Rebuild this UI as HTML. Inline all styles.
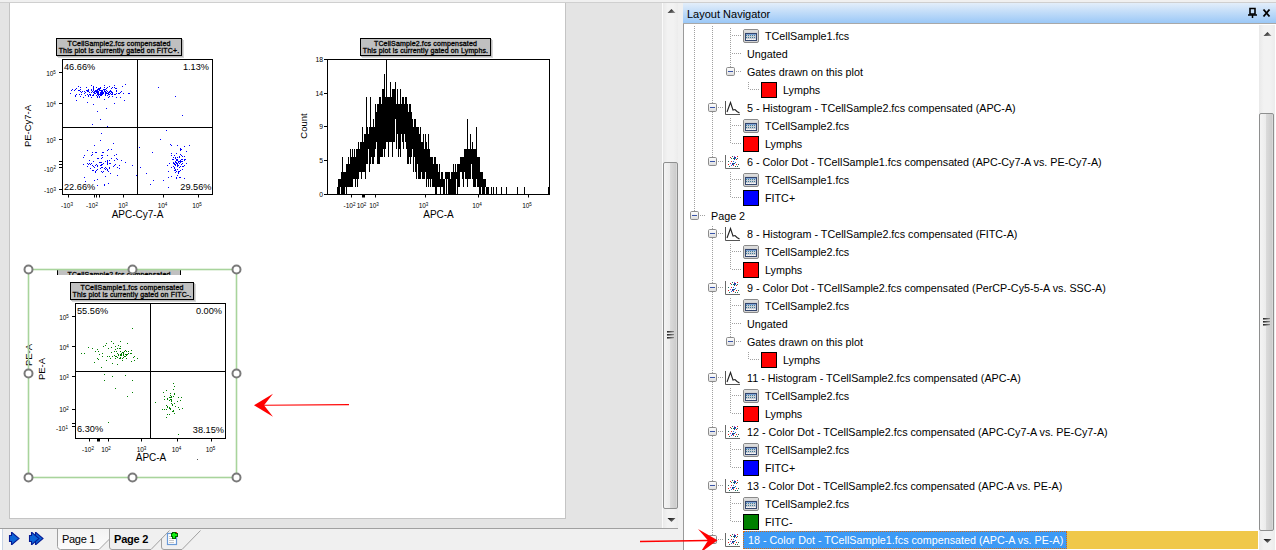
<!DOCTYPE html><html><head><meta charset="utf-8"><style>
*{margin:0;padding:0;box-sizing:border-box}
html,body{width:1276px;height:550px;overflow:hidden;background:#e4e4e4;font-family:"Liberation Sans", sans-serif;}
.a{position:absolute}
.t{position:absolute;white-space:nowrap;font-size:10.75px;line-height:12px;color:#000}
</style></head><body>
<div class="a" style="left:0;top:0;width:1276px;height:2px;background:#f0f0f0"></div><div class="a" style="left:0;top:2px;width:1276px;height:1px;background:#cfcfcf"></div><div class="a" style="left:9px;top:3px;width:557px;height:516px;background:#c4c4c4"></div><div class="a" style="left:10px;top:3px;width:555px;height:515px;background:#fff"></div><div class="a" style="left:662px;top:3px;width:1px;height:525px;background:#fafafa"></div><div class="a" style="left:663px;top:3px;width:15px;height:525px;background:linear-gradient(90deg,#e9e9e9,#f2f2f2 30%,#f2f2f2 70%,#ececec)"></div><div class="a" style="left:678px;top:3px;width:5px;height:547px;background:#f0f0f0"></div><svg class="a" style="left:667px;top:8px" width="9" height="6"><defs><linearGradient id="ag67111" x1="0" y1="0" x2="1" y2="1"><stop offset="0" stop-color="#000"/><stop offset="1" stop-color="#9a9a9a"/></linearGradient></defs><path d="M0.5 5 L4.5 1 L8.5 5 Z" fill="url(#ag67111)"/></svg><div class="a" style="left:663px;top:162px;width:15px;height:347px;border:1px solid #8e8f8f;border-radius:2px;background:linear-gradient(90deg,#f4f4f4,#ececec 45%,#dadada 50%,#cdcdcd 90%,#e0e0e0)"></div><div class="a" style="left:667px;top:331px;width:7px;height:1px;background:linear-gradient(90deg,#222,#888)"></div><div class="a" style="left:667px;top:332px;width:7px;height:1px;background:linear-gradient(90deg,#777,#ccc)"></div><div class="a" style="left:667px;top:334px;width:7px;height:1px;background:linear-gradient(90deg,#222,#888)"></div><div class="a" style="left:667px;top:335px;width:7px;height:1px;background:linear-gradient(90deg,#777,#ccc)"></div><div class="a" style="left:667px;top:337px;width:7px;height:1px;background:linear-gradient(90deg,#222,#888)"></div><div class="a" style="left:667px;top:338px;width:7px;height:1px;background:linear-gradient(90deg,#777,#ccc)"></div><svg class="a" style="left:667px;top:517px" width="9" height="6"><defs><linearGradient id="ad671519" x1="0" y1="0" x2="1" y2="1"><stop offset="0" stop-color="#000"/><stop offset="1" stop-color="#9a9a9a"/></linearGradient></defs><path d="M0.5 1 L8.5 1 L4.5 5 Z" fill="url(#ad671519)"/></svg><div class="a" style="left:0;top:528px;width:678px;height:1px;background:#a0a0a0"></div><div class="a" style="left:0;top:529px;width:678px;height:21px;background:#f0f0f0"></div><div class="a" style="left:0;top:529px;width:3px;height:21px;background:#fff;border-right:1px solid #c8d4e4"></div><svg class="a" style="left:0;top:0;pointer-events:none" width="210" height="550"><path d="M9.5 535.5 H11.5 V532.5 H12 L19 538.5 L12 544.5 H11.5 V541.5 H9.5 Z" fill="#0b64d6" stroke="#071c94" stroke-width="1.1"/><path d="M35.5 532.5 H36 L43 538.5 L36 544.5 H35.5 Z" fill="#0b64d6" stroke="#071c94" stroke-width="1.1"/><path d="M29.5 535.5 H31.5 V532.5 H32 L39 538.5 L32 544.5 H31.5 V541.5 H29.5 Z" fill="#0b64d6" stroke="#071c94" stroke-width="1.1"/><path d="M57 529 H110 V539 L99 550 H57 Z" fill="url(#tab1g)"/><path d="M57.5 529 V546.5 Q57.5 549.5 60.5 549.5 H99 L109.5 539" fill="none" stroke="#a0a0a0" stroke-width="1"/><path d="M109.5 529 V547 Q109.5 549.5 112 549.5 H151 L169.5 530.5" fill="none" stroke="#a0a0a0" stroke-width="1"/><path d="M161.5 538.5 V547 Q161.5 549.5 164 549.5 H182 L200.5 530.5" fill="none" stroke="#a0a0a0" stroke-width="1"/><defs><linearGradient id="tab1g" x1="0" y1="0" x2="0" y2="1"><stop offset="0" stop-color="#f3f3f3"/><stop offset="1" stop-color="#fdfdfd"/></linearGradient></defs><rect x="167.5" y="533.5" width="9" height="11" fill="#fff" stroke="#6a9ad8" stroke-width="1.2"/><path d="M169 536.5 H171 M169 538.5 H172 M169 540.5 H174 M169 542.5 H174" stroke="#c8c8c8"/><g shape-rendering="crispEdges"><rect x="172" y="532" width="4" height="7" fill="#006400"/><rect x="171" y="533" width="7" height="4" fill="#006400"/><rect x="173" y="533" width="2" height="5" fill="#10f010"/><rect x="172" y="534" width="5" height="2" fill="#10f010"/><rect x="176" y="532" width="1" height="1" fill="#f03020"/></g></svg><div class="t" style="left:62px;top:533px;font-size:11px;letter-spacing:-0.3px">Page 1</div><div class="t" style="left:114px;top:533px;font-size:11px;font-weight:bold;letter-spacing:-0.2px">Page 2</div><div class="a" style="left:683px;top:3px;width:593px;height:20px;background:linear-gradient(180deg,#e3eefa,#9bc8f7)"></div><div class="a" style="left:683px;top:23px;width:593px;height:1px;background:#a8a8a8"></div><div class="t" style="left:687px;top:8px;font-size:11px;color:#000">Layout Navigator</div><svg class="a" style="left:1246px;top:6px" width="28" height="14"><path d="M4 2.5 H9 V8 H4 Z" fill="none" stroke="#000" stroke-width="1.6"/><path d="M2 9 H11 M6.5 9 V12" stroke="#000" stroke-width="1.5"/><path d="M17.5 3.5 L23.5 10.5 M23.5 3.5 L17.5 10.5" stroke="#000" stroke-width="1.9"/></svg><div class="a" style="left:683px;top:24px;width:1px;height:526px;background:#9a9a9a"></div><div class="a" style="left:684px;top:24px;width:592px;height:526px;background:#fff"></div><div class="a" style="left:1259px;top:25px;width:16px;height:525px;background:linear-gradient(90deg,#e9e9e9,#f2f2f2 30%,#f2f2f2 70%,#ececec)"></div><svg class="a" style="left:1263px;top:31px" width="9" height="6"><defs><linearGradient id="ag126734" x1="0" y1="0" x2="1" y2="1"><stop offset="0" stop-color="#000"/><stop offset="1" stop-color="#9a9a9a"/></linearGradient></defs><path d="M0.5 5 L4.5 1 L8.5 5 Z" fill="url(#ag126734)"/></svg><div class="a" style="left:1259px;top:113px;width:15px;height:418px;border:1px solid #8e8f8f;border-radius:2px;background:linear-gradient(90deg,#f4f4f4,#ececec 45%,#dadada 50%,#cdcdcd 90%,#e0e0e0)"></div><div class="a" style="left:1263px;top:318px;width:7px;height:1px;background:linear-gradient(90deg,#222,#888)"></div><div class="a" style="left:1263px;top:319px;width:7px;height:1px;background:linear-gradient(90deg,#777,#ccc)"></div><div class="a" style="left:1263px;top:321px;width:7px;height:1px;background:linear-gradient(90deg,#222,#888)"></div><div class="a" style="left:1263px;top:322px;width:7px;height:1px;background:linear-gradient(90deg,#777,#ccc)"></div><div class="a" style="left:1263px;top:324px;width:7px;height:1px;background:linear-gradient(90deg,#222,#888)"></div><div class="a" style="left:1263px;top:325px;width:7px;height:1px;background:linear-gradient(90deg,#777,#ccc)"></div><svg class="a" style="left:1263px;top:538px" width="9" height="6"><defs><linearGradient id="ad1267540" x1="0" y1="0" x2="1" y2="1"><stop offset="0" stop-color="#000"/><stop offset="1" stop-color="#9a9a9a"/></linearGradient></defs><path d="M0.5 1 L8.5 1 L4.5 5 Z" fill="url(#ad1267540)"/></svg><div class="t" style="left:765px;top:30px">TCellSample1.fcs</div><div class="t" style="left:747px;top:48px">Ungated</div><div class="t" style="left:747px;top:66px">Gates drawn on this plot</div><div class="t" style="left:783px;top:84px">Lymphs</div><div class="t" style="left:747px;top:102px">5 - Histogram - TCellSample2.fcs compensated (APC-A)</div><div class="t" style="left:765px;top:120px">TCellSample2.fcs</div><div class="t" style="left:765px;top:138px">Lymphs</div><div class="t" style="left:747px;top:156px">6 - Color Dot - TCellSample1.fcs compensated (APC-Cy7-A vs. PE-Cy7-A)</div><div class="t" style="left:765px;top:174px">TCellSample1.fcs</div><div class="t" style="left:765px;top:192px">FITC+</div><div class="t" style="left:711px;top:210px">Page 2</div><div class="t" style="left:747px;top:228px">8 - Histogram - TCellSample2.fcs compensated (FITC-A)</div><div class="t" style="left:765px;top:246px">TCellSample2.fcs</div><div class="t" style="left:765px;top:264px">Lymphs</div><div class="t" style="left:747px;top:282px">9 - Color Dot - TCellSample2.fcs compensated (PerCP-Cy5-5-A vs. SSC-A)</div><div class="t" style="left:765px;top:300px">TCellSample2.fcs</div><div class="t" style="left:747px;top:318px">Ungated</div><div class="t" style="left:747px;top:336px">Gates drawn on this plot</div><div class="t" style="left:783px;top:354px">Lymphs</div><div class="t" style="left:747px;top:372px">11 - Histogram - TCellSample2.fcs compensated (APC-A)</div><div class="t" style="left:765px;top:390px">TCellSample2.fcs</div><div class="t" style="left:765px;top:408px">Lymphs</div><div class="t" style="left:747px;top:426px">12 - Color Dot - TCellSample2.fcs compensated (APC-Cy7-A vs. PE-Cy7-A)</div><div class="t" style="left:765px;top:444px">TCellSample2.fcs</div><div class="t" style="left:765px;top:462px">FITC+</div><div class="t" style="left:747px;top:480px">13 - Color Dot - TCellSample2.fcs compensated (APC-A vs. PE-A)</div><div class="t" style="left:765px;top:498px">TCellSample2.fcs</div><div class="t" style="left:765px;top:516px">FITC-</div><div class="a" style="left:743px;top:531px;width:324px;height:18px;background:#3d9af5;border:1px dotted #d86a10"></div><div class="a" style="left:1067px;top:531px;width:191px;height:18px;background:#f0c84a"></div><div class="t" style="left:748px;top:534px;color:#fff">18 - Color Dot - TCellSample1.fcs compensated (APC-A vs. PE-A)</div><svg class="a" style="left:0;top:0" width="1276" height="550"><defs><linearGradient id="bxg" x1="0" y1="0" x2="0" y2="1"><stop offset="0" stop-color="#fff"/><stop offset="1" stop-color="#dcdcdc"/></linearGradient><linearGradient id="dig" x1="0" y1="0" x2="0" y2="1"><stop offset="0" stop-color="#5a8ee0"/><stop offset="0.5" stop-color="#b8c8e0"/><stop offset="1" stop-color="#d0d8e8"/></linearGradient></defs><path d="M694 26h1v1h-1zM694 28h1v1h-1zM694 30h1v1h-1zM694 32h1v1h-1zM694 34h1v1h-1zM694 36h1v1h-1zM694 38h1v1h-1zM694 40h1v1h-1zM694 42h1v1h-1zM694 44h1v1h-1zM712 26h1v1h-1zM712 28h1v1h-1zM712 30h1v1h-1zM712 32h1v1h-1zM712 34h1v1h-1zM712 36h1v1h-1zM712 38h1v1h-1zM712 40h1v1h-1zM712 42h1v1h-1zM712 44h1v1h-1zM730 28h1v1h-1zM730 30h1v1h-1zM730 32h1v1h-1zM730 34h1v1h-1zM730 36h1v1h-1zM730 38h1v1h-1zM730 40h1v1h-1zM730 42h1v1h-1zM730 44h1v1h-1zM732 35h1v1h-1zM734 35h1v1h-1zM736 35h1v1h-1zM738 35h1v1h-1zM740 35h1v1h-1zM694 46h1v1h-1zM694 48h1v1h-1zM694 50h1v1h-1zM694 52h1v1h-1zM694 54h1v1h-1zM694 56h1v1h-1zM694 58h1v1h-1zM694 60h1v1h-1zM694 62h1v1h-1zM712 46h1v1h-1zM712 48h1v1h-1zM712 50h1v1h-1zM712 52h1v1h-1zM712 54h1v1h-1zM712 56h1v1h-1zM712 58h1v1h-1zM712 60h1v1h-1zM712 62h1v1h-1zM730 46h1v1h-1zM730 48h1v1h-1zM730 50h1v1h-1zM730 52h1v1h-1zM730 54h1v1h-1zM730 56h1v1h-1zM730 58h1v1h-1zM730 60h1v1h-1zM730 62h1v1h-1zM732 53h1v1h-1zM734 53h1v1h-1zM736 53h1v1h-1zM738 53h1v1h-1zM740 53h1v1h-1zM694 64h1v1h-1zM694 66h1v1h-1zM694 68h1v1h-1zM694 70h1v1h-1zM694 72h1v1h-1zM694 74h1v1h-1zM694 76h1v1h-1zM694 78h1v1h-1zM694 80h1v1h-1zM712 64h1v1h-1zM712 66h1v1h-1zM712 68h1v1h-1zM712 70h1v1h-1zM712 72h1v1h-1zM712 74h1v1h-1zM712 76h1v1h-1zM712 78h1v1h-1zM712 80h1v1h-1zM730 64h1v1h-1zM730 66h1v1h-1zM736 71h1v1h-1zM738 71h1v1h-1zM740 71h1v1h-1zM694 82h1v1h-1zM694 84h1v1h-1zM694 86h1v1h-1zM694 88h1v1h-1zM694 90h1v1h-1zM694 92h1v1h-1zM694 94h1v1h-1zM694 96h1v1h-1zM694 98h1v1h-1zM712 82h1v1h-1zM712 84h1v1h-1zM712 86h1v1h-1zM712 88h1v1h-1zM712 90h1v1h-1zM712 92h1v1h-1zM712 94h1v1h-1zM712 96h1v1h-1zM712 98h1v1h-1zM748 82h1v1h-1zM748 84h1v1h-1zM748 86h1v1h-1zM748 88h1v1h-1zM750 89h1v1h-1zM752 89h1v1h-1zM754 89h1v1h-1zM756 89h1v1h-1zM758 89h1v1h-1zM694 100h1v1h-1zM694 102h1v1h-1zM694 104h1v1h-1zM694 106h1v1h-1zM694 108h1v1h-1zM694 110h1v1h-1zM694 112h1v1h-1zM694 114h1v1h-1zM694 116h1v1h-1zM712 100h1v1h-1zM712 102h1v1h-1zM712 112h1v1h-1zM712 114h1v1h-1zM712 116h1v1h-1zM718 107h1v1h-1zM720 107h1v1h-1zM722 107h1v1h-1zM694 118h1v1h-1zM694 120h1v1h-1zM694 122h1v1h-1zM694 124h1v1h-1zM694 126h1v1h-1zM694 128h1v1h-1zM694 130h1v1h-1zM694 132h1v1h-1zM694 134h1v1h-1zM712 118h1v1h-1zM712 120h1v1h-1zM712 122h1v1h-1zM712 124h1v1h-1zM712 126h1v1h-1zM712 128h1v1h-1zM712 130h1v1h-1zM712 132h1v1h-1zM712 134h1v1h-1zM730 118h1v1h-1zM730 120h1v1h-1zM730 122h1v1h-1zM730 124h1v1h-1zM730 126h1v1h-1zM730 128h1v1h-1zM730 130h1v1h-1zM730 132h1v1h-1zM730 134h1v1h-1zM732 125h1v1h-1zM734 125h1v1h-1zM736 125h1v1h-1zM738 125h1v1h-1zM740 125h1v1h-1zM694 136h1v1h-1zM694 138h1v1h-1zM694 140h1v1h-1zM694 142h1v1h-1zM694 144h1v1h-1zM694 146h1v1h-1zM694 148h1v1h-1zM694 150h1v1h-1zM694 152h1v1h-1zM712 136h1v1h-1zM712 138h1v1h-1zM712 140h1v1h-1zM712 142h1v1h-1zM712 144h1v1h-1zM712 146h1v1h-1zM712 148h1v1h-1zM712 150h1v1h-1zM712 152h1v1h-1zM730 136h1v1h-1zM730 138h1v1h-1zM730 140h1v1h-1zM730 142h1v1h-1zM732 143h1v1h-1zM734 143h1v1h-1zM736 143h1v1h-1zM738 143h1v1h-1zM740 143h1v1h-1zM694 154h1v1h-1zM694 156h1v1h-1zM694 158h1v1h-1zM694 160h1v1h-1zM694 162h1v1h-1zM694 164h1v1h-1zM694 166h1v1h-1zM694 168h1v1h-1zM694 170h1v1h-1zM712 154h1v1h-1zM712 156h1v1h-1zM718 161h1v1h-1zM720 161h1v1h-1zM722 161h1v1h-1zM694 172h1v1h-1zM694 174h1v1h-1zM694 176h1v1h-1zM694 178h1v1h-1zM694 180h1v1h-1zM694 182h1v1h-1zM694 184h1v1h-1zM694 186h1v1h-1zM694 188h1v1h-1zM730 172h1v1h-1zM730 174h1v1h-1zM730 176h1v1h-1zM730 178h1v1h-1zM730 180h1v1h-1zM730 182h1v1h-1zM730 184h1v1h-1zM730 186h1v1h-1zM730 188h1v1h-1zM732 179h1v1h-1zM734 179h1v1h-1zM736 179h1v1h-1zM738 179h1v1h-1zM740 179h1v1h-1zM694 190h1v1h-1zM694 192h1v1h-1zM694 194h1v1h-1zM694 196h1v1h-1zM694 198h1v1h-1zM694 200h1v1h-1zM694 202h1v1h-1zM694 204h1v1h-1zM694 206h1v1h-1zM730 190h1v1h-1zM730 192h1v1h-1zM730 194h1v1h-1zM730 196h1v1h-1zM732 197h1v1h-1zM734 197h1v1h-1zM736 197h1v1h-1zM738 197h1v1h-1zM740 197h1v1h-1zM694 208h1v1h-1zM694 210h1v1h-1zM700 215h1v1h-1zM702 215h1v1h-1zM704 215h1v1h-1zM712 226h1v1h-1zM712 228h1v1h-1zM712 238h1v1h-1zM712 240h1v1h-1zM712 242h1v1h-1zM718 233h1v1h-1zM720 233h1v1h-1zM722 233h1v1h-1zM712 244h1v1h-1zM712 246h1v1h-1zM712 248h1v1h-1zM712 250h1v1h-1zM712 252h1v1h-1zM712 254h1v1h-1zM712 256h1v1h-1zM712 258h1v1h-1zM712 260h1v1h-1zM730 244h1v1h-1zM730 246h1v1h-1zM730 248h1v1h-1zM730 250h1v1h-1zM730 252h1v1h-1zM730 254h1v1h-1zM730 256h1v1h-1zM730 258h1v1h-1zM730 260h1v1h-1zM732 251h1v1h-1zM734 251h1v1h-1zM736 251h1v1h-1zM738 251h1v1h-1zM740 251h1v1h-1zM712 262h1v1h-1zM712 264h1v1h-1zM712 266h1v1h-1zM712 268h1v1h-1zM712 270h1v1h-1zM712 272h1v1h-1zM712 274h1v1h-1zM712 276h1v1h-1zM712 278h1v1h-1zM730 262h1v1h-1zM730 264h1v1h-1zM730 266h1v1h-1zM730 268h1v1h-1zM732 269h1v1h-1zM734 269h1v1h-1zM736 269h1v1h-1zM738 269h1v1h-1zM740 269h1v1h-1zM712 280h1v1h-1zM712 282h1v1h-1zM712 292h1v1h-1zM712 294h1v1h-1zM712 296h1v1h-1zM718 287h1v1h-1zM720 287h1v1h-1zM722 287h1v1h-1zM712 298h1v1h-1zM712 300h1v1h-1zM712 302h1v1h-1zM712 304h1v1h-1zM712 306h1v1h-1zM712 308h1v1h-1zM712 310h1v1h-1zM712 312h1v1h-1zM712 314h1v1h-1zM730 298h1v1h-1zM730 300h1v1h-1zM730 302h1v1h-1zM730 304h1v1h-1zM730 306h1v1h-1zM730 308h1v1h-1zM730 310h1v1h-1zM730 312h1v1h-1zM730 314h1v1h-1zM732 305h1v1h-1zM734 305h1v1h-1zM736 305h1v1h-1zM738 305h1v1h-1zM740 305h1v1h-1zM712 316h1v1h-1zM712 318h1v1h-1zM712 320h1v1h-1zM712 322h1v1h-1zM712 324h1v1h-1zM712 326h1v1h-1zM712 328h1v1h-1zM712 330h1v1h-1zM712 332h1v1h-1zM730 316h1v1h-1zM730 318h1v1h-1zM730 320h1v1h-1zM730 322h1v1h-1zM730 324h1v1h-1zM730 326h1v1h-1zM730 328h1v1h-1zM730 330h1v1h-1zM730 332h1v1h-1zM732 323h1v1h-1zM734 323h1v1h-1zM736 323h1v1h-1zM738 323h1v1h-1zM740 323h1v1h-1zM712 334h1v1h-1zM712 336h1v1h-1zM712 338h1v1h-1zM712 340h1v1h-1zM712 342h1v1h-1zM712 344h1v1h-1zM712 346h1v1h-1zM712 348h1v1h-1zM712 350h1v1h-1zM730 334h1v1h-1zM730 336h1v1h-1zM736 341h1v1h-1zM738 341h1v1h-1zM740 341h1v1h-1zM712 352h1v1h-1zM712 354h1v1h-1zM712 356h1v1h-1zM712 358h1v1h-1zM712 360h1v1h-1zM712 362h1v1h-1zM712 364h1v1h-1zM712 366h1v1h-1zM712 368h1v1h-1zM748 352h1v1h-1zM748 354h1v1h-1zM748 356h1v1h-1zM748 358h1v1h-1zM750 359h1v1h-1zM752 359h1v1h-1zM754 359h1v1h-1zM756 359h1v1h-1zM758 359h1v1h-1zM712 370h1v1h-1zM712 372h1v1h-1zM712 382h1v1h-1zM712 384h1v1h-1zM712 386h1v1h-1zM718 377h1v1h-1zM720 377h1v1h-1zM722 377h1v1h-1zM712 388h1v1h-1zM712 390h1v1h-1zM712 392h1v1h-1zM712 394h1v1h-1zM712 396h1v1h-1zM712 398h1v1h-1zM712 400h1v1h-1zM712 402h1v1h-1zM712 404h1v1h-1zM730 388h1v1h-1zM730 390h1v1h-1zM730 392h1v1h-1zM730 394h1v1h-1zM730 396h1v1h-1zM730 398h1v1h-1zM730 400h1v1h-1zM730 402h1v1h-1zM730 404h1v1h-1zM732 395h1v1h-1zM734 395h1v1h-1zM736 395h1v1h-1zM738 395h1v1h-1zM740 395h1v1h-1zM712 406h1v1h-1zM712 408h1v1h-1zM712 410h1v1h-1zM712 412h1v1h-1zM712 414h1v1h-1zM712 416h1v1h-1zM712 418h1v1h-1zM712 420h1v1h-1zM712 422h1v1h-1zM730 406h1v1h-1zM730 408h1v1h-1zM730 410h1v1h-1zM730 412h1v1h-1zM732 413h1v1h-1zM734 413h1v1h-1zM736 413h1v1h-1zM738 413h1v1h-1zM740 413h1v1h-1zM712 424h1v1h-1zM712 426h1v1h-1zM712 436h1v1h-1zM712 438h1v1h-1zM712 440h1v1h-1zM718 431h1v1h-1zM720 431h1v1h-1zM722 431h1v1h-1zM712 442h1v1h-1zM712 444h1v1h-1zM712 446h1v1h-1zM712 448h1v1h-1zM712 450h1v1h-1zM712 452h1v1h-1zM712 454h1v1h-1zM712 456h1v1h-1zM712 458h1v1h-1zM730 442h1v1h-1zM730 444h1v1h-1zM730 446h1v1h-1zM730 448h1v1h-1zM730 450h1v1h-1zM730 452h1v1h-1zM730 454h1v1h-1zM730 456h1v1h-1zM730 458h1v1h-1zM732 449h1v1h-1zM734 449h1v1h-1zM736 449h1v1h-1zM738 449h1v1h-1zM740 449h1v1h-1zM712 460h1v1h-1zM712 462h1v1h-1zM712 464h1v1h-1zM712 466h1v1h-1zM712 468h1v1h-1zM712 470h1v1h-1zM712 472h1v1h-1zM712 474h1v1h-1zM712 476h1v1h-1zM730 460h1v1h-1zM730 462h1v1h-1zM730 464h1v1h-1zM730 466h1v1h-1zM732 467h1v1h-1zM734 467h1v1h-1zM736 467h1v1h-1zM738 467h1v1h-1zM740 467h1v1h-1zM712 478h1v1h-1zM712 480h1v1h-1zM712 490h1v1h-1zM712 492h1v1h-1zM712 494h1v1h-1zM718 485h1v1h-1zM720 485h1v1h-1zM722 485h1v1h-1zM712 496h1v1h-1zM712 498h1v1h-1zM712 500h1v1h-1zM712 502h1v1h-1zM712 504h1v1h-1zM712 506h1v1h-1zM712 508h1v1h-1zM712 510h1v1h-1zM712 512h1v1h-1zM730 496h1v1h-1zM730 498h1v1h-1zM730 500h1v1h-1zM730 502h1v1h-1zM730 504h1v1h-1zM730 506h1v1h-1zM730 508h1v1h-1zM730 510h1v1h-1zM730 512h1v1h-1zM732 503h1v1h-1zM734 503h1v1h-1zM736 503h1v1h-1zM738 503h1v1h-1zM740 503h1v1h-1zM712 514h1v1h-1zM712 516h1v1h-1zM712 518h1v1h-1zM712 520h1v1h-1zM712 522h1v1h-1zM712 524h1v1h-1zM712 526h1v1h-1zM712 528h1v1h-1zM712 530h1v1h-1zM730 514h1v1h-1zM730 516h1v1h-1zM730 518h1v1h-1zM730 520h1v1h-1zM732 521h1v1h-1zM734 521h1v1h-1zM736 521h1v1h-1zM738 521h1v1h-1zM740 521h1v1h-1zM712 532h1v1h-1zM712 534h1v1h-1zM718 539h1v1h-1zM720 539h1v1h-1zM722 539h1v1h-1z" fill="#a0a0a0"/><rect x="743.5" y="29.5" width="15" height="13" rx="1.5" fill="#d3d3d3" stroke="#8a8a8a"/><rect x="744" y="30" width="14" height="2" fill="#dcdcdc"/><rect x="745.5" y="33.5" width="11" height="7" fill="#c9cdd6" stroke="#34466e"/><rect x="746" y="34" width="10" height="1" fill="#7ea4d8"/><rect x="746" y="35" width="1" height="1" fill="#3f7f96"/><rect x="746" y="37" width="1" height="1" fill="#3f7f96"/><rect x="746" y="39" width="1.6" height="1" fill="#fafafa"/><rect x="748" y="35" width="1" height="1" fill="#3f7f96"/><rect x="748" y="37" width="1" height="1" fill="#3f7f96"/><rect x="748" y="39" width="1.6" height="1" fill="#fafafa"/><rect x="750" y="35" width="1" height="1" fill="#3f7f96"/><rect x="750" y="37" width="1" height="1" fill="#3f7f96"/><rect x="750" y="39" width="1.6" height="1" fill="#fafafa"/><rect x="752" y="35" width="1" height="1" fill="#3f7f96"/><rect x="752" y="37" width="1" height="1" fill="#3f7f96"/><rect x="752" y="39" width="1.6" height="1" fill="#fafafa"/><rect x="754" y="35" width="1" height="1" fill="#3f7f96"/><rect x="754" y="37" width="1" height="1" fill="#3f7f96"/><rect x="754" y="39" width="1.6" height="1" fill="#fafafa"/><rect x="726.5" y="67.5" width="8" height="8" rx="1.2" fill="url(#bxg)" stroke="#8c8c8c"/><rect x="728" y="71" width="5" height="1" fill="#3a55a8"/><rect x="761.5" y="82.5" width="15" height="15" fill="#ff0000" stroke="#000"/><rect x="708.5" y="103.5" width="8" height="8" rx="1.2" fill="url(#bxg)" stroke="#8c8c8c"/><rect x="710" y="107" width="5" height="1" fill="#3a55a8"/><path d="M725.5 101 V114.5 H740" fill="none" stroke="#555" stroke-width="1"/><path d="M727 112 L730.5 102.5 L733 110 L735 109.5 L737 111.5 L739.5 113" fill="none" stroke="#222" stroke-width="1.1"/><rect x="743.5" y="119.5" width="15" height="13" rx="1.5" fill="#d3d3d3" stroke="#8a8a8a"/><rect x="744" y="120" width="14" height="2" fill="#dcdcdc"/><rect x="745.5" y="123.5" width="11" height="7" fill="#c9cdd6" stroke="#34466e"/><rect x="746" y="124" width="10" height="1" fill="#7ea4d8"/><rect x="746" y="125" width="1" height="1" fill="#3f7f96"/><rect x="746" y="127" width="1" height="1" fill="#3f7f96"/><rect x="746" y="129" width="1.6" height="1" fill="#fafafa"/><rect x="748" y="125" width="1" height="1" fill="#3f7f96"/><rect x="748" y="127" width="1" height="1" fill="#3f7f96"/><rect x="748" y="129" width="1.6" height="1" fill="#fafafa"/><rect x="750" y="125" width="1" height="1" fill="#3f7f96"/><rect x="750" y="127" width="1" height="1" fill="#3f7f96"/><rect x="750" y="129" width="1.6" height="1" fill="#fafafa"/><rect x="752" y="125" width="1" height="1" fill="#3f7f96"/><rect x="752" y="127" width="1" height="1" fill="#3f7f96"/><rect x="752" y="129" width="1.6" height="1" fill="#fafafa"/><rect x="754" y="125" width="1" height="1" fill="#3f7f96"/><rect x="754" y="127" width="1" height="1" fill="#3f7f96"/><rect x="754" y="129" width="1.6" height="1" fill="#fafafa"/><rect x="743.5" y="136.5" width="15" height="15" fill="#ff0000" stroke="#000"/><rect x="708.5" y="157.5" width="8" height="8" rx="1.2" fill="url(#bxg)" stroke="#8c8c8c"/><rect x="710" y="161" width="5" height="1" fill="#3a55a8"/><path d="M725.5 155 V168.5 H740" fill="none" stroke="#6a6a6a" stroke-width="1"/><rect x="732" y="156" width="1" height="1" fill="#1f6e5e"/><rect x="734" y="156" width="1" height="1" fill="#c040d0"/><rect x="737" y="156" width="1" height="1" fill="#e02020"/><rect x="730" y="157" width="1" height="1" fill="#e02020"/><rect x="731" y="158" width="1" height="1" fill="#1f6e5e"/><rect x="733" y="158" width="1" height="1" fill="#1f6e5e"/><rect x="734" y="157" width="1" height="1" fill="#203a90"/><rect x="735" y="157" width="1" height="1" fill="#203a90"/><rect x="734" y="158" width="1" height="1" fill="#203a90"/><rect x="735" y="158" width="1" height="1" fill="#2a70e0"/><rect x="737" y="158" width="1" height="1" fill="#1f6e5e"/><rect x="736" y="159" width="1" height="1" fill="#e02020"/><rect x="734" y="159" width="1" height="1" fill="#1f6e5e"/><rect x="728" y="161" width="1" height="1" fill="#1f6e5e"/><rect x="731" y="161" width="1" height="1" fill="#e02020"/><rect x="733" y="161" width="1" height="1" fill="#2a70e0"/><rect x="735" y="162" width="1" height="1" fill="#2a70e0"/><rect x="730" y="163" width="1" height="1" fill="#c040d0"/><rect x="732" y="163" width="1" height="1" fill="#203a90"/><rect x="733" y="163" width="1" height="1" fill="#203a90"/><rect x="734" y="163" width="1" height="1" fill="#1f6e5e"/><rect x="732" y="164" width="1" height="1" fill="#203a90"/><rect x="733" y="164" width="1" height="1" fill="#2a70e0"/><rect x="728" y="164" width="1" height="1" fill="#e02020"/><rect x="736" y="164" width="1" height="1" fill="#e02020"/><rect x="738" y="164" width="1" height="1" fill="#1f6e5e"/><rect x="731" y="165" width="1" height="1" fill="#2a70e0"/><rect x="733" y="165" width="1" height="1" fill="#e02020"/><rect x="729" y="166" width="1" height="1" fill="#1f6e5e"/><rect x="735" y="166" width="1" height="1" fill="#1f6e5e"/><rect x="737" y="166" width="1" height="1" fill="#1f6e5e"/><rect x="743.5" y="173.5" width="15" height="13" rx="1.5" fill="#d3d3d3" stroke="#8a8a8a"/><rect x="744" y="174" width="14" height="2" fill="#dcdcdc"/><rect x="745.5" y="177.5" width="11" height="7" fill="#c9cdd6" stroke="#34466e"/><rect x="746" y="178" width="10" height="1" fill="#7ea4d8"/><rect x="746" y="179" width="1" height="1" fill="#3f7f96"/><rect x="746" y="181" width="1" height="1" fill="#3f7f96"/><rect x="746" y="183" width="1.6" height="1" fill="#fafafa"/><rect x="748" y="179" width="1" height="1" fill="#3f7f96"/><rect x="748" y="181" width="1" height="1" fill="#3f7f96"/><rect x="748" y="183" width="1.6" height="1" fill="#fafafa"/><rect x="750" y="179" width="1" height="1" fill="#3f7f96"/><rect x="750" y="181" width="1" height="1" fill="#3f7f96"/><rect x="750" y="183" width="1.6" height="1" fill="#fafafa"/><rect x="752" y="179" width="1" height="1" fill="#3f7f96"/><rect x="752" y="181" width="1" height="1" fill="#3f7f96"/><rect x="752" y="183" width="1.6" height="1" fill="#fafafa"/><rect x="754" y="179" width="1" height="1" fill="#3f7f96"/><rect x="754" y="181" width="1" height="1" fill="#3f7f96"/><rect x="754" y="183" width="1.6" height="1" fill="#fafafa"/><rect x="743.5" y="190.5" width="15" height="15" fill="#0000ff" stroke="#000"/><rect x="690.5" y="211.5" width="8" height="8" rx="1.2" fill="url(#bxg)" stroke="#8c8c8c"/><rect x="692" y="215" width="5" height="1" fill="#3a55a8"/><rect x="708.5" y="229.5" width="8" height="8" rx="1.2" fill="url(#bxg)" stroke="#8c8c8c"/><rect x="710" y="233" width="5" height="1" fill="#3a55a8"/><path d="M725.5 227 V240.5 H740" fill="none" stroke="#555" stroke-width="1"/><path d="M727 238 L730.5 228.5 L733 236 L735 235.5 L737 237.5 L739.5 239" fill="none" stroke="#222" stroke-width="1.1"/><rect x="743.5" y="245.5" width="15" height="13" rx="1.5" fill="#d3d3d3" stroke="#8a8a8a"/><rect x="744" y="246" width="14" height="2" fill="#dcdcdc"/><rect x="745.5" y="249.5" width="11" height="7" fill="#c9cdd6" stroke="#34466e"/><rect x="746" y="250" width="10" height="1" fill="#7ea4d8"/><rect x="746" y="251" width="1" height="1" fill="#3f7f96"/><rect x="746" y="253" width="1" height="1" fill="#3f7f96"/><rect x="746" y="255" width="1.6" height="1" fill="#fafafa"/><rect x="748" y="251" width="1" height="1" fill="#3f7f96"/><rect x="748" y="253" width="1" height="1" fill="#3f7f96"/><rect x="748" y="255" width="1.6" height="1" fill="#fafafa"/><rect x="750" y="251" width="1" height="1" fill="#3f7f96"/><rect x="750" y="253" width="1" height="1" fill="#3f7f96"/><rect x="750" y="255" width="1.6" height="1" fill="#fafafa"/><rect x="752" y="251" width="1" height="1" fill="#3f7f96"/><rect x="752" y="253" width="1" height="1" fill="#3f7f96"/><rect x="752" y="255" width="1.6" height="1" fill="#fafafa"/><rect x="754" y="251" width="1" height="1" fill="#3f7f96"/><rect x="754" y="253" width="1" height="1" fill="#3f7f96"/><rect x="754" y="255" width="1.6" height="1" fill="#fafafa"/><rect x="743.5" y="262.5" width="15" height="15" fill="#ff0000" stroke="#000"/><rect x="708.5" y="283.5" width="8" height="8" rx="1.2" fill="url(#bxg)" stroke="#8c8c8c"/><rect x="710" y="287" width="5" height="1" fill="#3a55a8"/><path d="M725.5 281 V294.5 H740" fill="none" stroke="#6a6a6a" stroke-width="1"/><rect x="732" y="282" width="1" height="1" fill="#1f6e5e"/><rect x="734" y="282" width="1" height="1" fill="#c040d0"/><rect x="737" y="282" width="1" height="1" fill="#e02020"/><rect x="730" y="283" width="1" height="1" fill="#e02020"/><rect x="731" y="284" width="1" height="1" fill="#1f6e5e"/><rect x="733" y="284" width="1" height="1" fill="#1f6e5e"/><rect x="734" y="283" width="1" height="1" fill="#203a90"/><rect x="735" y="283" width="1" height="1" fill="#203a90"/><rect x="734" y="284" width="1" height="1" fill="#203a90"/><rect x="735" y="284" width="1" height="1" fill="#2a70e0"/><rect x="737" y="284" width="1" height="1" fill="#1f6e5e"/><rect x="736" y="285" width="1" height="1" fill="#e02020"/><rect x="734" y="285" width="1" height="1" fill="#1f6e5e"/><rect x="728" y="287" width="1" height="1" fill="#1f6e5e"/><rect x="731" y="287" width="1" height="1" fill="#e02020"/><rect x="733" y="287" width="1" height="1" fill="#2a70e0"/><rect x="735" y="288" width="1" height="1" fill="#2a70e0"/><rect x="730" y="289" width="1" height="1" fill="#c040d0"/><rect x="732" y="289" width="1" height="1" fill="#203a90"/><rect x="733" y="289" width="1" height="1" fill="#203a90"/><rect x="734" y="289" width="1" height="1" fill="#1f6e5e"/><rect x="732" y="290" width="1" height="1" fill="#203a90"/><rect x="733" y="290" width="1" height="1" fill="#2a70e0"/><rect x="728" y="290" width="1" height="1" fill="#e02020"/><rect x="736" y="290" width="1" height="1" fill="#e02020"/><rect x="738" y="290" width="1" height="1" fill="#1f6e5e"/><rect x="731" y="291" width="1" height="1" fill="#2a70e0"/><rect x="733" y="291" width="1" height="1" fill="#e02020"/><rect x="729" y="292" width="1" height="1" fill="#1f6e5e"/><rect x="735" y="292" width="1" height="1" fill="#1f6e5e"/><rect x="737" y="292" width="1" height="1" fill="#1f6e5e"/><rect x="743.5" y="299.5" width="15" height="13" rx="1.5" fill="#d3d3d3" stroke="#8a8a8a"/><rect x="744" y="300" width="14" height="2" fill="#dcdcdc"/><rect x="745.5" y="303.5" width="11" height="7" fill="#c9cdd6" stroke="#34466e"/><rect x="746" y="304" width="10" height="1" fill="#7ea4d8"/><rect x="746" y="305" width="1" height="1" fill="#3f7f96"/><rect x="746" y="307" width="1" height="1" fill="#3f7f96"/><rect x="746" y="309" width="1.6" height="1" fill="#fafafa"/><rect x="748" y="305" width="1" height="1" fill="#3f7f96"/><rect x="748" y="307" width="1" height="1" fill="#3f7f96"/><rect x="748" y="309" width="1.6" height="1" fill="#fafafa"/><rect x="750" y="305" width="1" height="1" fill="#3f7f96"/><rect x="750" y="307" width="1" height="1" fill="#3f7f96"/><rect x="750" y="309" width="1.6" height="1" fill="#fafafa"/><rect x="752" y="305" width="1" height="1" fill="#3f7f96"/><rect x="752" y="307" width="1" height="1" fill="#3f7f96"/><rect x="752" y="309" width="1.6" height="1" fill="#fafafa"/><rect x="754" y="305" width="1" height="1" fill="#3f7f96"/><rect x="754" y="307" width="1" height="1" fill="#3f7f96"/><rect x="754" y="309" width="1.6" height="1" fill="#fafafa"/><rect x="726.5" y="337.5" width="8" height="8" rx="1.2" fill="url(#bxg)" stroke="#8c8c8c"/><rect x="728" y="341" width="5" height="1" fill="#3a55a8"/><rect x="761.5" y="352.5" width="15" height="15" fill="#ff0000" stroke="#000"/><rect x="708.5" y="373.5" width="8" height="8" rx="1.2" fill="url(#bxg)" stroke="#8c8c8c"/><rect x="710" y="377" width="5" height="1" fill="#3a55a8"/><path d="M725.5 371 V384.5 H740" fill="none" stroke="#555" stroke-width="1"/><path d="M727 382 L730.5 372.5 L733 380 L735 379.5 L737 381.5 L739.5 383" fill="none" stroke="#222" stroke-width="1.1"/><rect x="743.5" y="389.5" width="15" height="13" rx="1.5" fill="#d3d3d3" stroke="#8a8a8a"/><rect x="744" y="390" width="14" height="2" fill="#dcdcdc"/><rect x="745.5" y="393.5" width="11" height="7" fill="#c9cdd6" stroke="#34466e"/><rect x="746" y="394" width="10" height="1" fill="#7ea4d8"/><rect x="746" y="395" width="1" height="1" fill="#3f7f96"/><rect x="746" y="397" width="1" height="1" fill="#3f7f96"/><rect x="746" y="399" width="1.6" height="1" fill="#fafafa"/><rect x="748" y="395" width="1" height="1" fill="#3f7f96"/><rect x="748" y="397" width="1" height="1" fill="#3f7f96"/><rect x="748" y="399" width="1.6" height="1" fill="#fafafa"/><rect x="750" y="395" width="1" height="1" fill="#3f7f96"/><rect x="750" y="397" width="1" height="1" fill="#3f7f96"/><rect x="750" y="399" width="1.6" height="1" fill="#fafafa"/><rect x="752" y="395" width="1" height="1" fill="#3f7f96"/><rect x="752" y="397" width="1" height="1" fill="#3f7f96"/><rect x="752" y="399" width="1.6" height="1" fill="#fafafa"/><rect x="754" y="395" width="1" height="1" fill="#3f7f96"/><rect x="754" y="397" width="1" height="1" fill="#3f7f96"/><rect x="754" y="399" width="1.6" height="1" fill="#fafafa"/><rect x="743.5" y="406.5" width="15" height="15" fill="#ff0000" stroke="#000"/><rect x="708.5" y="427.5" width="8" height="8" rx="1.2" fill="url(#bxg)" stroke="#8c8c8c"/><rect x="710" y="431" width="5" height="1" fill="#3a55a8"/><path d="M725.5 425 V438.5 H740" fill="none" stroke="#6a6a6a" stroke-width="1"/><rect x="732" y="426" width="1" height="1" fill="#1f6e5e"/><rect x="734" y="426" width="1" height="1" fill="#c040d0"/><rect x="737" y="426" width="1" height="1" fill="#e02020"/><rect x="730" y="427" width="1" height="1" fill="#e02020"/><rect x="731" y="428" width="1" height="1" fill="#1f6e5e"/><rect x="733" y="428" width="1" height="1" fill="#1f6e5e"/><rect x="734" y="427" width="1" height="1" fill="#203a90"/><rect x="735" y="427" width="1" height="1" fill="#203a90"/><rect x="734" y="428" width="1" height="1" fill="#203a90"/><rect x="735" y="428" width="1" height="1" fill="#2a70e0"/><rect x="737" y="428" width="1" height="1" fill="#1f6e5e"/><rect x="736" y="429" width="1" height="1" fill="#e02020"/><rect x="734" y="429" width="1" height="1" fill="#1f6e5e"/><rect x="728" y="431" width="1" height="1" fill="#1f6e5e"/><rect x="731" y="431" width="1" height="1" fill="#e02020"/><rect x="733" y="431" width="1" height="1" fill="#2a70e0"/><rect x="735" y="432" width="1" height="1" fill="#2a70e0"/><rect x="730" y="433" width="1" height="1" fill="#c040d0"/><rect x="732" y="433" width="1" height="1" fill="#203a90"/><rect x="733" y="433" width="1" height="1" fill="#203a90"/><rect x="734" y="433" width="1" height="1" fill="#1f6e5e"/><rect x="732" y="434" width="1" height="1" fill="#203a90"/><rect x="733" y="434" width="1" height="1" fill="#2a70e0"/><rect x="728" y="434" width="1" height="1" fill="#e02020"/><rect x="736" y="434" width="1" height="1" fill="#e02020"/><rect x="738" y="434" width="1" height="1" fill="#1f6e5e"/><rect x="731" y="435" width="1" height="1" fill="#2a70e0"/><rect x="733" y="435" width="1" height="1" fill="#e02020"/><rect x="729" y="436" width="1" height="1" fill="#1f6e5e"/><rect x="735" y="436" width="1" height="1" fill="#1f6e5e"/><rect x="737" y="436" width="1" height="1" fill="#1f6e5e"/><rect x="743.5" y="443.5" width="15" height="13" rx="1.5" fill="#d3d3d3" stroke="#8a8a8a"/><rect x="744" y="444" width="14" height="2" fill="#dcdcdc"/><rect x="745.5" y="447.5" width="11" height="7" fill="#c9cdd6" stroke="#34466e"/><rect x="746" y="448" width="10" height="1" fill="#7ea4d8"/><rect x="746" y="449" width="1" height="1" fill="#3f7f96"/><rect x="746" y="451" width="1" height="1" fill="#3f7f96"/><rect x="746" y="453" width="1.6" height="1" fill="#fafafa"/><rect x="748" y="449" width="1" height="1" fill="#3f7f96"/><rect x="748" y="451" width="1" height="1" fill="#3f7f96"/><rect x="748" y="453" width="1.6" height="1" fill="#fafafa"/><rect x="750" y="449" width="1" height="1" fill="#3f7f96"/><rect x="750" y="451" width="1" height="1" fill="#3f7f96"/><rect x="750" y="453" width="1.6" height="1" fill="#fafafa"/><rect x="752" y="449" width="1" height="1" fill="#3f7f96"/><rect x="752" y="451" width="1" height="1" fill="#3f7f96"/><rect x="752" y="453" width="1.6" height="1" fill="#fafafa"/><rect x="754" y="449" width="1" height="1" fill="#3f7f96"/><rect x="754" y="451" width="1" height="1" fill="#3f7f96"/><rect x="754" y="453" width="1.6" height="1" fill="#fafafa"/><rect x="743.5" y="460.5" width="15" height="15" fill="#0000ff" stroke="#000"/><rect x="708.5" y="481.5" width="8" height="8" rx="1.2" fill="url(#bxg)" stroke="#8c8c8c"/><rect x="710" y="485" width="5" height="1" fill="#3a55a8"/><path d="M725.5 479 V492.5 H740" fill="none" stroke="#6a6a6a" stroke-width="1"/><rect x="732" y="480" width="1" height="1" fill="#1f6e5e"/><rect x="734" y="480" width="1" height="1" fill="#c040d0"/><rect x="737" y="480" width="1" height="1" fill="#e02020"/><rect x="730" y="481" width="1" height="1" fill="#e02020"/><rect x="731" y="482" width="1" height="1" fill="#1f6e5e"/><rect x="733" y="482" width="1" height="1" fill="#1f6e5e"/><rect x="734" y="481" width="1" height="1" fill="#203a90"/><rect x="735" y="481" width="1" height="1" fill="#203a90"/><rect x="734" y="482" width="1" height="1" fill="#203a90"/><rect x="735" y="482" width="1" height="1" fill="#2a70e0"/><rect x="737" y="482" width="1" height="1" fill="#1f6e5e"/><rect x="736" y="483" width="1" height="1" fill="#e02020"/><rect x="734" y="483" width="1" height="1" fill="#1f6e5e"/><rect x="728" y="485" width="1" height="1" fill="#1f6e5e"/><rect x="731" y="485" width="1" height="1" fill="#e02020"/><rect x="733" y="485" width="1" height="1" fill="#2a70e0"/><rect x="735" y="486" width="1" height="1" fill="#2a70e0"/><rect x="730" y="487" width="1" height="1" fill="#c040d0"/><rect x="732" y="487" width="1" height="1" fill="#203a90"/><rect x="733" y="487" width="1" height="1" fill="#203a90"/><rect x="734" y="487" width="1" height="1" fill="#1f6e5e"/><rect x="732" y="488" width="1" height="1" fill="#203a90"/><rect x="733" y="488" width="1" height="1" fill="#2a70e0"/><rect x="728" y="488" width="1" height="1" fill="#e02020"/><rect x="736" y="488" width="1" height="1" fill="#e02020"/><rect x="738" y="488" width="1" height="1" fill="#1f6e5e"/><rect x="731" y="489" width="1" height="1" fill="#2a70e0"/><rect x="733" y="489" width="1" height="1" fill="#e02020"/><rect x="729" y="490" width="1" height="1" fill="#1f6e5e"/><rect x="735" y="490" width="1" height="1" fill="#1f6e5e"/><rect x="737" y="490" width="1" height="1" fill="#1f6e5e"/><rect x="743.5" y="497.5" width="15" height="13" rx="1.5" fill="#d3d3d3" stroke="#8a8a8a"/><rect x="744" y="498" width="14" height="2" fill="#dcdcdc"/><rect x="745.5" y="501.5" width="11" height="7" fill="#c9cdd6" stroke="#34466e"/><rect x="746" y="502" width="10" height="1" fill="#7ea4d8"/><rect x="746" y="503" width="1" height="1" fill="#3f7f96"/><rect x="746" y="505" width="1" height="1" fill="#3f7f96"/><rect x="746" y="507" width="1.6" height="1" fill="#fafafa"/><rect x="748" y="503" width="1" height="1" fill="#3f7f96"/><rect x="748" y="505" width="1" height="1" fill="#3f7f96"/><rect x="748" y="507" width="1.6" height="1" fill="#fafafa"/><rect x="750" y="503" width="1" height="1" fill="#3f7f96"/><rect x="750" y="505" width="1" height="1" fill="#3f7f96"/><rect x="750" y="507" width="1.6" height="1" fill="#fafafa"/><rect x="752" y="503" width="1" height="1" fill="#3f7f96"/><rect x="752" y="505" width="1" height="1" fill="#3f7f96"/><rect x="752" y="507" width="1.6" height="1" fill="#fafafa"/><rect x="754" y="503" width="1" height="1" fill="#3f7f96"/><rect x="754" y="505" width="1" height="1" fill="#3f7f96"/><rect x="754" y="507" width="1.6" height="1" fill="#fafafa"/><rect x="743.5" y="514.5" width="15" height="15" fill="#008000" stroke="#000"/><rect x="708.5" y="535.5" width="8" height="8" rx="1.2" fill="url(#bxg)" stroke="#8c8c8c"/><rect x="710" y="539" width="5" height="1" fill="#3a55a8"/><path d="M725.5 533 V546.5 H740" fill="none" stroke="#6a6a6a" stroke-width="1"/><rect x="732" y="534" width="1" height="1" fill="#1f6e5e"/><rect x="734" y="534" width="1" height="1" fill="#c040d0"/><rect x="737" y="534" width="1" height="1" fill="#e02020"/><rect x="730" y="535" width="1" height="1" fill="#e02020"/><rect x="731" y="536" width="1" height="1" fill="#1f6e5e"/><rect x="733" y="536" width="1" height="1" fill="#1f6e5e"/><rect x="734" y="535" width="1" height="1" fill="#203a90"/><rect x="735" y="535" width="1" height="1" fill="#203a90"/><rect x="734" y="536" width="1" height="1" fill="#203a90"/><rect x="735" y="536" width="1" height="1" fill="#2a70e0"/><rect x="737" y="536" width="1" height="1" fill="#1f6e5e"/><rect x="736" y="537" width="1" height="1" fill="#e02020"/><rect x="734" y="537" width="1" height="1" fill="#1f6e5e"/><rect x="728" y="539" width="1" height="1" fill="#1f6e5e"/><rect x="731" y="539" width="1" height="1" fill="#e02020"/><rect x="733" y="539" width="1" height="1" fill="#2a70e0"/><rect x="735" y="540" width="1" height="1" fill="#2a70e0"/><rect x="730" y="541" width="1" height="1" fill="#c040d0"/><rect x="732" y="541" width="1" height="1" fill="#203a90"/><rect x="733" y="541" width="1" height="1" fill="#203a90"/><rect x="734" y="541" width="1" height="1" fill="#1f6e5e"/><rect x="732" y="542" width="1" height="1" fill="#203a90"/><rect x="733" y="542" width="1" height="1" fill="#2a70e0"/><rect x="728" y="542" width="1" height="1" fill="#e02020"/><rect x="736" y="542" width="1" height="1" fill="#e02020"/><rect x="738" y="542" width="1" height="1" fill="#1f6e5e"/><rect x="731" y="543" width="1" height="1" fill="#2a70e0"/><rect x="733" y="543" width="1" height="1" fill="#e02020"/><rect x="729" y="544" width="1" height="1" fill="#1f6e5e"/><rect x="735" y="544" width="1" height="1" fill="#1f6e5e"/><rect x="737" y="544" width="1" height="1" fill="#1f6e5e"/></svg><svg class="a" style="left:0;top:0;font-family:'Liberation Sans',sans-serif" width="566" height="519"><rect x="58" y="40" width="126" height="18" fill="#d8d8d8"/><rect x="57" y="39" width="126" height="18" fill="#bdbdbd"/><rect x="56.5" y="38.5" width="125" height="17" fill="#c0c0c0" stroke="#000"/><text x="119.0" y="46" font-size="7" text-anchor="middle" font-weight="normal" stroke="#000" stroke-width="0.3" letter-spacing="0.15">TCellSample2.fcs compensated</text><text x="119.0" y="53" font-size="7" text-anchor="middle" font-weight="normal" stroke="#000" stroke-width="0.3" letter-spacing="0.15">This plot is currently gated on FITC+.</text><rect x="62.5" y="59.5" width="150" height="135" fill="#fff" stroke="#000"/><path d="M137.5 59 V194" stroke="#000"/><path d="M62 127.5 H212" stroke="#000"/><path d="M95 93h1v1h-1zM96 90h1v1h-1zM87 91h1v1h-1zM112 93h1v1h-1zM111 92h1v1h-1zM103 92h1v1h-1zM79 94h1v1h-1zM105 93h1v1h-1zM78 86h1v1h-1zM88 90h1v1h-1zM102 91h1v1h-1zM105 89h1v1h-1zM102 93h1v1h-1zM91 97h1v1h-1zM105 95h1v1h-1zM91 89h1v1h-1zM94 91h1v1h-1zM106 92h1v1h-1zM93 88h1v1h-1zM92 95h1v1h-1zM89 92h1v1h-1zM104 87h1v1h-1zM99 96h1v1h-1zM74 90h1v1h-1zM97 89h1v1h-1zM104 91h1v1h-1zM81 94h1v1h-1zM107 95h1v1h-1zM116 93h1v1h-1zM100 87h1v1h-1zM106 90h1v1h-1zM93 87h1v1h-1zM87 90h1v1h-1zM114 85h1v1h-1zM81 92h1v1h-1zM116 93h1v1h-1zM103 89h1v1h-1zM85 95h1v1h-1zM112 92h1v1h-1zM101 93h1v1h-1zM118 93h1v1h-1zM105 93h1v1h-1zM80 96h1v1h-1zM110 93h1v1h-1zM75 89h1v1h-1zM109 86h1v1h-1zM96 95h1v1h-1zM83 97h1v1h-1zM105 91h1v1h-1zM102 94h1v1h-1zM100 95h1v1h-1zM91 90h1v1h-1zM111 92h1v1h-1zM88 95h1v1h-1zM116 90h1v1h-1zM82 91h1v1h-1zM97 91h1v1h-1zM115 88h1v1h-1zM114 87h1v1h-1zM89 94h1v1h-1zM112 94h1v1h-1zM103 92h1v1h-1zM100 93h1v1h-1zM96 92h1v1h-1zM105 92h1v1h-1zM108 93h1v1h-1zM123 93h1v1h-1zM93 90h1v1h-1zM98 94h1v1h-1zM94 93h1v1h-1zM85 92h1v1h-1zM103 92h1v1h-1zM93 94h1v1h-1zM102 90h1v1h-1zM128 93h1v1h-1zM92 91h1v1h-1zM96 91h1v1h-1zM111 88h1v1h-1zM98 95h1v1h-1zM109 96h1v1h-1zM78 90h1v1h-1zM94 93h1v1h-1zM112 87h1v1h-1zM107 87h1v1h-1zM101 95h1v1h-1zM97 92h1v1h-1zM108 92h1v1h-1zM97 96h1v1h-1zM111 91h1v1h-1zM109 91h1v1h-1zM100 94h1v1h-1zM101 94h1v1h-1zM80 87h1v1h-1zM106 88h1v1h-1zM86 87h1v1h-1zM114 94h1v1h-1zM116 88h1v1h-1zM99 88h1v1h-1zM108 97h1v1h-1zM88 96h1v1h-1zM110 91h1v1h-1zM75 96h1v1h-1zM97 90h1v1h-1zM103 93h1v1h-1zM116 88h1v1h-1zM112 96h1v1h-1zM116 91h1v1h-1zM90 95h1v1h-1zM100 92h1v1h-1zM116 91h1v1h-1zM71 90h1v1h-1zM76 94h1v1h-1zM102 90h1v1h-1zM98 94h1v1h-1zM99 96h1v1h-1zM98 95h1v1h-1zM116 97h1v1h-1zM90 94h1v1h-1zM76 88h1v1h-1zM75 95h1v1h-1zM84 91h1v1h-1zM96 91h1v1h-1zM91 92h1v1h-1zM120 92h1v1h-1zM105 95h1v1h-1zM96 87h1v1h-1zM92 95h1v1h-1zM79 90h1v1h-1zM111 94h1v1h-1zM99 94h1v1h-1zM100 88h1v1h-1zM80 89h1v1h-1zM110 90h1v1h-1zM88 89h1v1h-1zM80 91h1v1h-1zM84 93h1v1h-1zM70 93h1v1h-1zM91 85h1v1h-1zM107 91h1v1h-1zM72 89h1v1h-1zM102 90h1v1h-1zM108 94h1v1h-1zM106 93h1v1h-1zM115 94h1v1h-1zM104 85h1v1h-1zM109 96h1v1h-1zM95 90h1v1h-1zM122 86h1v1h-1zM104 99h1v1h-1zM87 94h1v1h-1zM121 91h1v1h-1zM105 94h1v1h-1zM88 91h1v1h-1zM102 94h1v1h-1zM98 91h1v1h-1zM86 90h1v1h-1zM109 92h1v1h-1zM88 89h1v1h-1zM106 93h1v1h-1zM119 93h1v1h-1zM98 93h1v1h-1zM89 94h1v1h-1zM100 90h1v1h-1zM105 95h1v1h-1zM91 90h1v1h-1zM100 92h1v1h-1zM97 90h1v1h-1zM109 94h1v1h-1zM93 89h1v1h-1zM107 93h1v1h-1zM108 93h1v1h-1zM94 92h1v1h-1zM88 90h1v1h-1zM98 93h1v1h-1zM95 91h1v1h-1zM101 92h1v1h-1zM102 92h1v1h-1zM97 93h1v1h-1zM99 90h1v1h-1zM95 91h1v1h-1zM98 92h1v1h-1zM98 92h1v1h-1zM98 89h1v1h-1zM101 94h1v1h-1zM101 91h1v1h-1zM101 90h1v1h-1zM89 92h1v1h-1zM94 93h1v1h-1zM93 86h1v1h-1zM93 95h1v1h-1zM97 89h1v1h-1zM95 93h1v1h-1zM101 92h1v1h-1zM106 93h1v1h-1zM98 93h1v1h-1zM107 93h1v1h-1zM104 89h1v1h-1zM98 93h1v1h-1zM97 94h1v1h-1zM101 93h1v1h-1zM97 97h1v1h-1zM105 91h1v1h-1zM99 97h1v1h-1zM97 93h1v1h-1zM103 92h1v1h-1zM93 92h1v1h-1zM100 94h1v1h-1zM102 92h1v1h-1zM103 93h1v1h-1zM100 92h1v1h-1zM97 93h1v1h-1zM93 90h1v1h-1zM99 89h1v1h-1zM96 87h1v1h-1zM95 93h1v1h-1zM101 91h1v1h-1zM97 89h1v1h-1zM108 93h1v1h-1zM104 90h1v1h-1zM98 88h1v1h-1zM125 84h1v1h-1zM129 93h1v1h-1zM87 102h1v1h-1zM93 104h1v1h-1zM106 108h1v1h-1zM97 111h1v1h-1zM100 119h1v1h-1zM92 124h1v1h-1zM107 126h1v1h-1zM124 100h1v1h-1zM76 100h1v1h-1zM120 97h1v1h-1zM114 103h1v1h-1zM158 87h1v1h-1zM175 96h1v1h-1zM182 115h1v1h-1zM110 173h1v1h-1zM83 164h1v1h-1zM108 149h1v1h-1zM84 155h1v1h-1zM96 152h1v1h-1zM102 167h1v1h-1zM108 171h1v1h-1zM117 175h1v1h-1zM89 160h1v1h-1zM91 155h1v1h-1zM101 165h1v1h-1zM107 150h1v1h-1zM90 164h1v1h-1zM100 162h1v1h-1zM101 158h1v1h-1zM109 168h1v1h-1zM101 158h1v1h-1zM100 140h1v1h-1zM92 165h1v1h-1zM87 166h1v1h-1zM103 152h1v1h-1zM99 162h1v1h-1zM107 170h1v1h-1zM102 157h1v1h-1zM101 164h1v1h-1zM109 167h1v1h-1zM95 152h1v1h-1zM98 158h1v1h-1zM91 163h1v1h-1zM97 165h1v1h-1zM107 161h1v1h-1zM125 162h1v1h-1zM113 166h1v1h-1zM113 143h1v1h-1zM94 167h1v1h-1zM105 176h1v1h-1zM110 173h1v1h-1zM107 163h1v1h-1zM107 155h1v1h-1zM114 155h1v1h-1zM104 184h1v1h-1zM100 165h1v1h-1zM114 165h1v1h-1zM94 167h1v1h-1zM108 171h1v1h-1zM94 180h1v1h-1zM119 165h1v1h-1zM105 161h1v1h-1zM116 158h1v1h-1zM109 160h1v1h-1zM95 171h1v1h-1zM115 164h1v1h-1zM95 172h1v1h-1zM102 167h1v1h-1zM117 175h1v1h-1zM97 185h1v1h-1zM102 172h1v1h-1zM96 164h1v1h-1zM85 181h1v1h-1zM116 154h1v1h-1zM87 150h1v1h-1zM114 160h1v1h-1zM101 162h1v1h-1zM101 155h1v1h-1zM102 152h1v1h-1zM101 167h1v1h-1zM107 162h1v1h-1zM93 166h1v1h-1zM97 179h1v1h-1zM110 163h1v1h-1zM97 158h1v1h-1zM93 161h1v1h-1zM105 169h1v1h-1zM108 183h1v1h-1zM95 165h1v1h-1zM97 166h1v1h-1zM104 168h1v1h-1zM100 168h1v1h-1zM103 171h1v1h-1zM83 157h1v1h-1zM102 155h1v1h-1zM92 170h1v1h-1zM96 170h1v1h-1zM109 167h1v1h-1zM107 164h1v1h-1zM88 164h1v1h-1zM107 160h1v1h-1zM101 171h1v1h-1zM93 170h1v1h-1zM121 160h1v1h-1zM103 163h1v1h-1zM117 167h1v1h-1zM111 158h1v1h-1zM102 164h1v1h-1zM84 177h1v1h-1zM111 149h1v1h-1zM109 163h1v1h-1zM106 168h1v1h-1zM87 163h1v1h-1zM117 159h1v1h-1zM92 152h1v1h-1zM90 168h1v1h-1zM119 168h1v1h-1zM104 185h1v1h-1zM97 158h1v1h-1zM107 169h1v1h-1zM92 154h1v1h-1zM105 167h1v1h-1zM89 163h1v1h-1zM97 169h1v1h-1zM101 133h1v1h-1zM94 145h1v1h-1zM132 165h1v1h-1zM136 175h1v1h-1zM176 162h1v1h-1zM175 172h1v1h-1zM185 159h1v1h-1zM182 156h1v1h-1zM177 169h1v1h-1zM185 159h1v1h-1zM177 164h1v1h-1zM169 163h1v1h-1zM173 166h1v1h-1zM171 145h1v1h-1zM177 165h1v1h-1zM174 170h1v1h-1zM175 157h1v1h-1zM180 148h1v1h-1zM173 162h1v1h-1zM182 161h1v1h-1zM179 157h1v1h-1zM179 177h1v1h-1zM173 163h1v1h-1zM178 172h1v1h-1zM170 144h1v1h-1zM180 170h1v1h-1zM178 165h1v1h-1zM182 166h1v1h-1zM186 151h1v1h-1zM181 159h1v1h-1zM177 160h1v1h-1zM174 155h1v1h-1zM174 168h1v1h-1zM177 163h1v1h-1zM176 171h1v1h-1zM180 161h1v1h-1zM181 161h1v1h-1zM171 176h1v1h-1zM180 154h1v1h-1zM183 166h1v1h-1zM168 177h1v1h-1zM179 171h1v1h-1zM178 161h1v1h-1zM168 171h1v1h-1zM177 160h1v1h-1zM179 163h1v1h-1zM181 159h1v1h-1zM175 169h1v1h-1zM184 159h1v1h-1zM176 177h1v1h-1zM175 169h1v1h-1zM186 163h1v1h-1zM184 156h1v1h-1zM178 162h1v1h-1zM178 173h1v1h-1zM174 167h1v1h-1zM171 167h1v1h-1zM180 160h1v1h-1zM180 149h1v1h-1zM181 149h1v1h-1zM173 157h1v1h-1zM175 170h1v1h-1zM177 159h1v1h-1zM180 177h1v1h-1zM177 166h1v1h-1zM184 165h1v1h-1zM189 145h1v1h-1zM177 166h1v1h-1zM182 169h1v1h-1zM176 153h1v1h-1zM178 172h1v1h-1zM171 153h1v1h-1zM177 145h1v1h-1zM176 159h1v1h-1zM179 156h1v1h-1zM172 159h1v1h-1zM177 157h1v1h-1zM177 169h1v1h-1zM184 178h1v1h-1zM173 159h1v1h-1zM163 180h1v1h-1zM173 162h1v1h-1zM180 150h1v1h-1zM180 162h1v1h-1zM167 165h1v1h-1zM184 146h1v1h-1zM181 164h1v1h-1zM180 166h1v1h-1zM184 160h1v1h-1zM182 159h1v1h-1zM181 155h1v1h-1zM176 178h1v1h-1zM179 161h1v1h-1zM171 155h1v1h-1zM178 171h1v1h-1zM179 167h1v1h-1zM177 175h1v1h-1zM175 158h1v1h-1zM182 163h1v1h-1zM175 161h1v1h-1zM175 164h1v1h-1zM176 160h1v1h-1zM176 163h1v1h-1zM174 164h1v1h-1zM175 162h1v1h-1zM177 165h1v1h-1zM174 163h1v1h-1zM174 167h1v1h-1zM175 165h1v1h-1zM174 164h1v1h-1zM179 157h1v1h-1zM175 164h1v1h-1zM175 161h1v1h-1zM179 163h1v1h-1zM166 130h1v1h-1zM160 139h1v1h-1zM139 147h1v1h-1zM152 152h1v1h-1zM140 167h1v1h-1zM146 173h1v1h-1zM153 180h1v1h-1zM150 184h1v1h-1zM168 187h1v1h-1z" fill="#0000ff"/><text x="64" y="70" font-size="9.2" text-anchor="start" font-weight="normal" >46.66%</text><text x="209" y="70" font-size="9.2" text-anchor="end" font-weight="normal" >1.13%</text><text x="64" y="190" font-size="9.2" text-anchor="start" font-weight="normal" >22.66%</text><text x="211.5" y="190" font-size="9.2" text-anchor="end" font-weight="normal" >29.56%</text><path d="M59 72.5 H62" stroke="#000"/><path d="M59 103.5 H62" stroke="#000"/><path d="M59 139.5 H62" stroke="#000"/><path d="M59 161.5 H62" stroke="#000"/><path d="M59 164.5 H62" stroke="#000"/><path d="M59 167.5 H62" stroke="#000"/><path d="M59 189.5 H62" stroke="#000"/><text x="51" y="76" font-size="6.5" text-anchor="middle">10<tspan font-size="4.5" dy="-2.5">5</tspan></text><text x="51" y="107" font-size="6.5" text-anchor="middle">10<tspan font-size="4.5" dy="-2.5">4</tspan></text><text x="51" y="143" font-size="6.5" text-anchor="middle">10<tspan font-size="4.5" dy="-2.5">3</tspan></text><text x="50" y="171.5" font-size="6.5" text-anchor="middle">-10<tspan font-size="4.5" dy="-2.5">2</tspan></text><text x="50" y="193" font-size="6.5" text-anchor="middle">-10<tspan font-size="4.5" dy="-2.5">3</tspan></text><path d="M68.5 194 V197.5" stroke="#000"/><path d="M94.5 194 V197.5" stroke="#000"/><path d="M96.5 194 V197.5" stroke="#000"/><path d="M99.5 194 V197.5" stroke="#000"/><path d="M123.5 194 V197.5" stroke="#000"/><path d="M163.5 194 V197.5" stroke="#000"/><path d="M198.5 194 V197.5" stroke="#000"/><text x="67" y="208" font-size="6.5" text-anchor="middle">-10<tspan font-size="4.5" dy="-2.5">3</tspan></text><text x="92" y="208" font-size="6.5" text-anchor="middle">-10<tspan font-size="4.5" dy="-2.5">2</tspan></text><text x="123" y="208" font-size="6.5" text-anchor="middle">10<tspan font-size="4.5" dy="-2.5">3</tspan></text><text x="162.5" y="208" font-size="6.5" text-anchor="middle">10<tspan font-size="4.5" dy="-2.5">4</tspan></text><text x="197" y="208" font-size="6.5" text-anchor="middle">10<tspan font-size="4.5" dy="-2.5">5</tspan></text><text x="137.5" y="217.5" font-size="10" text-anchor="middle" font-weight="normal" >APC-Cy7-A</text><text transform="translate(31,126) rotate(-90)" font-size="9.5" text-anchor="middle">PE-Cy7-A</text><rect x="362" y="40" width="131" height="18" fill="#d8d8d8"/><rect x="361" y="39" width="131" height="18" fill="#bdbdbd"/><rect x="360.5" y="38.5" width="130" height="17" fill="#c0c0c0" stroke="#000"/><text x="425.5" y="46" font-size="7" text-anchor="middle" font-weight="normal" stroke="#000" stroke-width="0.3" letter-spacing="0.15">TCellSample2.fcs compensated</text><text x="425.5" y="53" font-size="7" text-anchor="middle" font-weight="normal" stroke="#000" stroke-width="0.3" letter-spacing="0.15">This plot is currently gated on Lymphs.</text><rect x="327.5" y="59.5" width="222" height="135" fill="#fff" stroke="#000"/><path d="M337.5 194.0V186.5M338.5 194.0V179.0M339.5 194.0V179.0M340.5 186.5V179.0M341.5 194.0V171.5M342.5 194.0V156.5M343.5 194.0V171.5M344.5 194.0V171.5M345.5 186.5V171.5M346.5 194.0V164.0M347.5 186.5V164.0M348.5 186.5V156.5M349.5 186.5V164.0M350.5 186.5V149.0M351.5 186.5V156.5M352.5 186.5V149.0M353.5 179.0V156.5M354.5 179.0V149.0M355.5 186.5V156.5M356.5 179.0V149.0M357.5 186.5V149.0M358.5 179.0V141.5M359.5 171.5V149.0M360.5 171.5V141.5M361.5 179.0V141.5M362.5 171.5V126.5M363.5 171.5V141.5M364.5 171.5V134.0M365.5 179.0V134.0M366.5 164.0V96.5M367.5 164.0V126.5M368.5 149.0V134.0M369.5 171.5V126.5M370.5 164.0V96.5M371.5 156.5V126.5M372.5 164.0V126.5M373.5 164.0V119.0M374.5 156.5V126.5M375.5 149.0V104.0M376.5 141.5V111.5M377.5 164.0V104.0M378.5 164.0V104.0M379.5 164.0V96.5M380.5 156.5V96.5M381.5 156.5V104.0M382.5 156.5V89.0M383.5 149.0V89.0M384.5 156.5V74.0M385.5 149.0V96.5M386.5 141.5V59.5M387.5 141.5V96.5M388.5 156.5V96.5M389.5 141.5V96.5M390.5 141.5V81.5M391.5 141.5V96.5M392.5 156.5V89.0M393.5 141.5V89.0M394.5 141.5V89.0M395.5 119.0V81.5M396.5 149.0V104.0M397.5 134.0V89.0M398.5 156.5V104.0M399.5 149.0V104.0M400.5 156.5V89.0M401.5 134.0V104.0M402.5 141.5V96.5M403.5 149.0V96.5M404.5 134.0V104.0M405.5 141.5V96.5M406.5 149.0V96.5M407.5 164.0V104.0M408.5 164.0V111.5M409.5 156.5V104.0M410.5 164.0V104.0M411.5 156.5V111.5M412.5 149.0V119.0M413.5 171.5V126.5M414.5 156.5V119.0M415.5 171.5V119.0M416.5 179.0V126.5M417.5 164.0V126.5M418.5 179.0V126.5M419.5 179.0V134.0M420.5 179.0V126.5M421.5 171.5V141.5M422.5 179.0V141.5M423.5 179.0V134.0M424.5 179.0V149.0M425.5 171.5V134.0M426.5 186.5V141.5M427.5 179.0V149.0M428.5 186.5V134.0M429.5 179.0V149.0M430.5 186.5V156.5M431.5 179.0V156.5M432.5 186.5V156.5M433.5 186.5V164.0M434.5 186.5V156.5M435.5 194.0V156.5M436.5 194.0V164.0M437.5 186.5V164.0M438.5 186.5V171.5M439.5 186.5V164.0M440.5 194.0V179.0M441.5 186.5V171.5M442.5 186.5V171.5M443.5 194.0V179.0M444.5 194.0V179.0M445.5 179.0V171.5M446.5 194.0V171.5M447.5 179.0V171.5M448.5 194.0V171.5M449.5 194.0V171.5M450.5 194.0V179.0M451.5 194.0V171.5M452.5 194.0V171.5M453.5 194.0V164.0M454.5 194.0V171.5M455.5 194.0V164.0M456.5 179.0V171.5M457.5 194.0V164.0M458.5 186.5V164.0M459.5 186.5V164.0M460.5 171.5V156.5M461.5 171.5V156.5M462.5 179.0V156.5M463.5 186.5V156.5M464.5 171.5V149.0M465.5 179.0V149.0M466.5 179.0V149.0M467.5 186.5V119.0M468.5 179.0V149.0M469.5 179.0V149.0M470.5 179.0V134.0M471.5 164.0V149.0M472.5 179.0V141.5M473.5 186.5V149.0M474.5 186.5V149.0M475.5 186.5V149.0M476.5 179.0V126.5M477.5 186.5V156.5M478.5 186.5V156.5M479.5 194.0V156.5M480.5 194.0V171.5M481.5 186.5V171.5M482.5 194.0V171.5M483.5 194.0V179.0M484.5 194.0V179.0M485.5 186.5V179.0M486.5 194.0V186.5M487.5 194.0V186.5M488.5 194.0V186.5M491.5 194V186.5M493.5 194V186.5M496.5 194V186.5M501.5 194V186.5M506.5 194V186.5M517.5 194V186.5M524.5 194V186.5M548.5 194V186.5" stroke="#000" stroke-width="1" fill="none" shape-rendering="crispEdges"/><rect x="327.5" y="59.5" width="222" height="135" fill="none" stroke="#000"/><path d="M324 59.5 H327" stroke="#000"/><path d="M324 93.5 H327" stroke="#000"/><path d="M324 126.5 H327" stroke="#000"/><path d="M324 160.5 H327" stroke="#000"/><path d="M324 194.5 H327" stroke="#000"/><text x="323" y="62" font-size="6.8" text-anchor="end" font-weight="normal" >18</text><text x="323" y="96" font-size="6.8" text-anchor="end" font-weight="normal" >14</text><text x="323" y="129" font-size="6.8" text-anchor="end" font-weight="normal" >9</text><text x="323" y="163" font-size="6.8" text-anchor="end" font-weight="normal" >5</text><text x="323" y="197" font-size="6.8" text-anchor="end" font-weight="normal" >0</text><path d="M351.5 194 V197.5" stroke="#000"/><path d="M362.5 194 V197.5" stroke="#000"/><path d="M363.5 194 V197.5" stroke="#000"/><path d="M364.5 194 V197.5" stroke="#000"/><path d="M375.5 194 V197.5" stroke="#000"/><path d="M425.5 194 V197.5" stroke="#000"/><path d="M478.5 194 V197.5" stroke="#000"/><path d="M528.5 194 V197.5" stroke="#000"/><text x="349.5" y="208" font-size="6.5" text-anchor="middle">-10<tspan font-size="4.5" dy="-2.5">2</tspan></text><text x="361.5" y="208" font-size="6.5" text-anchor="middle">10<tspan font-size="4.5" dy="-2.5">2</tspan></text><text x="374" y="208" font-size="6.5" text-anchor="middle">10<tspan font-size="4.5" dy="-2.5">3</tspan></text><text x="423.5" y="208" font-size="6.5" text-anchor="middle">10<tspan font-size="4.5" dy="-2.5">3</tspan></text><text x="477" y="208" font-size="6.5" text-anchor="middle">10<tspan font-size="4.5" dy="-2.5">4</tspan></text><text x="527" y="208" font-size="6.5" text-anchor="middle">10<tspan font-size="4.5" dy="-2.5">5</tspan></text><text x="438.5" y="217.5" font-size="10" text-anchor="middle" font-weight="normal" >APC-A</text><text transform="translate(307,126) rotate(-90)" font-size="9.5" text-anchor="middle">Count</text><rect x="57.5" y="270" width="123" height="5" fill="#c0c0c0"/><path d="M57.5 270 V275 M180.5 270 V275" stroke="#000"/><svg x="57" y="270" width="124" height="5" overflow="hidden"><text x="62" y="7" font-size="7" text-anchor="middle" font-weight="normal" stroke="#000" stroke-width="0.3" letter-spacing="0.15">TCellSample2.fcs compensated</text></svg><rect x="72" y="284" width="124" height="18" fill="#d8d8d8"/><rect x="71" y="283" width="124" height="18" fill="#bdbdbd"/><rect x="70.5" y="282.5" width="123" height="17" fill="#c0c0c0" stroke="#000"/><text x="132.0" y="290" font-size="7" text-anchor="middle" font-weight="normal" stroke="#000" stroke-width="0.3" letter-spacing="0.15">TCellSample1.fcs compensated</text><text x="132.0" y="297" font-size="7" text-anchor="middle" font-weight="normal" stroke="#000" stroke-width="0.3" letter-spacing="0.15">This plot is currently gated on FITC-.</text><rect x="75.5" y="303.5" width="150" height="135" fill="#fff" stroke="#000"/><path d="M150.5 303 V438" stroke="#000"/><path d="M75 371.5 H225" stroke="#000"/><path d="M103 346h1v1h-1zM122 360h1v1h-1zM117 364h1v1h-1zM106 360h1v1h-1zM130 353h1v1h-1zM98 351h1v1h-1zM131 350h1v1h-1zM114 355h1v1h-1zM122 352h1v1h-1zM133 357h1v1h-1zM99 354h1v1h-1zM112 363h1v1h-1zM126 355h1v1h-1zM116 351h1v1h-1zM112 363h1v1h-1zM115 349h1v1h-1zM126 358h1v1h-1zM117 348h1v1h-1zM134 360h1v1h-1zM92 348h1v1h-1zM97 358h1v1h-1zM115 358h1v1h-1zM94 362h1v1h-1zM126 351h1v1h-1zM110 358h1v1h-1zM110 358h1v1h-1zM112 356h1v1h-1zM97 349h1v1h-1zM95 351h1v1h-1zM111 352h1v1h-1zM120 341h1v1h-1zM118 355h1v1h-1zM102 353h1v1h-1zM88 347h1v1h-1zM105 345h1v1h-1zM134 356h1v1h-1zM120 351h1v1h-1zM137 358h1v1h-1zM123 352h1v1h-1zM114 351h1v1h-1zM118 345h1v1h-1zM119 358h1v1h-1zM120 346h1v1h-1zM120 348h1v1h-1zM101 367h1v1h-1zM111 347h1v1h-1zM98 351h1v1h-1zM111 341h1v1h-1zM98 359h1v1h-1zM106 343h1v1h-1zM127 343h1v1h-1zM108 348h1v1h-1zM113 343h1v1h-1zM107 356h1v1h-1zM131 361h1v1h-1zM131 353h1v1h-1zM123 357h1v1h-1zM109 356h1v1h-1zM123 353h1v1h-1zM116 356h1v1h-1zM105 345h1v1h-1zM121 355h1v1h-1zM102 356h1v1h-1zM121 353h1v1h-1zM125 356h1v1h-1zM120 358h1v1h-1zM115 346h1v1h-1zM120 357h1v1h-1zM117 357h1v1h-1zM119 348h1v1h-1zM117 353h1v1h-1zM120 355h1v1h-1zM128 351h1v1h-1zM120 357h1v1h-1zM126 354h1v1h-1zM123 355h1v1h-1zM128 353h1v1h-1zM120 357h1v1h-1zM120 354h1v1h-1zM127 354h1v1h-1zM123 355h1v1h-1zM120 355h1v1h-1zM124 351h1v1h-1zM121 354h1v1h-1zM124 356h1v1h-1zM122 360h1v1h-1zM118 354h1v1h-1zM125 354h1v1h-1zM121 354h1v1h-1zM123 354h1v1h-1zM125 350h1v1h-1zM123 354h1v1h-1zM122 358h1v1h-1zM125 356h1v1h-1zM115 356h1v1h-1zM132 328h1v1h-1zM104 374h1v1h-1zM112 376h1v1h-1zM125 375h1v1h-1zM104 380h1v1h-1zM132 380h1v1h-1zM115 388h1v1h-1zM132 392h1v1h-1zM127 396h1v1h-1zM108 422h1v1h-1zM81 353h1v1h-1zM84 353h1v1h-1zM163 392h1v1h-1zM169 414h1v1h-1zM162 409h1v1h-1zM179 409h1v1h-1zM173 410h1v1h-1zM169 400h1v1h-1zM174 394h1v1h-1zM171 403h1v1h-1zM170 409h1v1h-1zM170 393h1v1h-1zM171 397h1v1h-1zM167 406h1v1h-1zM181 397h1v1h-1zM171 399h1v1h-1zM166 409h1v1h-1zM172 411h1v1h-1zM171 401h1v1h-1zM180 400h1v1h-1zM173 411h1v1h-1zM170 408h1v1h-1zM167 399h1v1h-1zM169 407h1v1h-1zM170 395h1v1h-1zM174 413h1v1h-1zM166 417h1v1h-1zM164 396h1v1h-1zM167 414h1v1h-1zM174 403h1v1h-1zM178 407h1v1h-1zM171 396h1v1h-1zM164 409h1v1h-1zM170 399h1v1h-1zM172 405h1v1h-1zM175 406h1v1h-1zM182 408h1v1h-1zM166 405h1v1h-1zM166 390h1v1h-1zM174 393h1v1h-1zM169 408h1v1h-1zM177 401h1v1h-1zM173 389h1v1h-1zM171 400h1v1h-1zM169 407h1v1h-1zM170 397h1v1h-1zM167 407h1v1h-1zM174 386h1v1h-1zM169 397h1v1h-1zM173 383h1v1h-1zM167 398h1v1h-1zM169 400h1v1h-1zM164 399h1v1h-1zM173 396h1v1h-1zM178 397h1v1h-1zM172 404h1v1h-1zM172 411h1v1h-1zM178 434h1v1h-1zM155 402h1v1h-1z" fill="#008000"/><text x="77" y="314" font-size="9.2" text-anchor="start" font-weight="normal" >55.56%</text><text x="222" y="314" font-size="9.2" text-anchor="end" font-weight="normal" >0.00%</text><text x="77" y="432" font-size="9.2" text-anchor="start" font-weight="normal" >6.30%</text><text x="224" y="432.5" font-size="9.2" text-anchor="end" font-weight="normal" >38.15%</text><path d="M72 316.5 H75" stroke="#000"/><path d="M72 346.5 H75" stroke="#000"/><path d="M72 376.5 H75" stroke="#000"/><path d="M72 409.5 H75" stroke="#000"/><path d="M72 423.5 H75" stroke="#000"/><path d="M72 426.5 H75" stroke="#000"/><text x="64" y="320" font-size="6.5" text-anchor="middle">10<tspan font-size="4.5" dy="-2.5">5</tspan></text><text x="64" y="350" font-size="6.5" text-anchor="middle">10<tspan font-size="4.5" dy="-2.5">4</tspan></text><text x="64" y="380" font-size="6.5" text-anchor="middle">10<tspan font-size="4.5" dy="-2.5">3</tspan></text><text x="64" y="412" font-size="6.5" text-anchor="middle">10<tspan font-size="4.5" dy="-2.5">2</tspan></text><text x="62" y="431" font-size="6.5" text-anchor="middle">-10<tspan font-size="4.5" dy="-2.5">1</tspan></text><path d="M89.5 438 V441.5" stroke="#000"/><path d="M97.5 438 V441.5" stroke="#000"/><path d="M98.5 438 V441.5" stroke="#000"/><path d="M99.5 438 V441.5" stroke="#000"/><path d="M108.5 438 V441.5" stroke="#000"/><path d="M141.5 438 V441.5" stroke="#000"/><path d="M177.5 438 V441.5" stroke="#000"/><path d="M211.5 438 V441.5" stroke="#000"/><text x="88" y="452" font-size="6.5" text-anchor="middle">-10<tspan font-size="4.5" dy="-2.5">2</tspan></text><text x="106" y="452" font-size="6.5" text-anchor="middle">10<tspan font-size="4.5" dy="-2.5">2</tspan></text><text x="141.5" y="452" font-size="6.5" text-anchor="middle">10<tspan font-size="4.5" dy="-2.5">3</tspan></text><text x="176.5" y="452" font-size="6.5" text-anchor="middle">10<tspan font-size="4.5" dy="-2.5">4</tspan></text><text x="210.5" y="452" font-size="6.5" text-anchor="middle">10<tspan font-size="4.5" dy="-2.5">5</tspan></text><text x="151" y="460.5" font-size="10" text-anchor="middle" font-weight="normal" >APC-A</text><text transform="translate(32,355) rotate(-90)" font-size="9.5" text-anchor="middle">PE-A</text><text transform="translate(45,369) rotate(-90)" font-size="9.5" text-anchor="middle">PE-A</text><rect x="197" y="459" width="1" height="1" fill="#555"/><rect x="28.5" y="269.5" width="208" height="208" fill="none" stroke="#a8d49c" stroke-width="1.6"/><circle cx="28.5" cy="269.5" r="4" fill="#fff" stroke="#7a7a7a" stroke-width="2"/><circle cx="28.5" cy="373.5" r="4" fill="#fff" stroke="#7a7a7a" stroke-width="2"/><circle cx="28.5" cy="477.5" r="4" fill="#fff" stroke="#7a7a7a" stroke-width="2"/><circle cx="132.5" cy="269.5" r="4" fill="#fff" stroke="#7a7a7a" stroke-width="2"/><circle cx="132.5" cy="477.5" r="4" fill="#fff" stroke="#7a7a7a" stroke-width="2"/><circle cx="236.5" cy="269.5" r="4" fill="#fff" stroke="#7a7a7a" stroke-width="2"/><circle cx="236.5" cy="373.5" r="4" fill="#fff" stroke="#7a7a7a" stroke-width="2"/><circle cx="236.5" cy="477.5" r="4" fill="#fff" stroke="#7a7a7a" stroke-width="2"/><path d="M264 405.2 L349 404.6" stroke="#ff0000" stroke-width="1.15"/><path d="M254 405.2 L273 393.7 L264 405.2 L273 416.8 Z" fill="#ff0000"/></svg><svg class="a" style="left:0;top:0" width="1276" height="550"><path d="M640 541.5 L708 540.5" stroke="#ff0000" stroke-width="1.3"/><path d="M717.5 540.2 L698 529 L708 540.5 L700 553 Z" fill="#ff0000"/></svg></body></html>
